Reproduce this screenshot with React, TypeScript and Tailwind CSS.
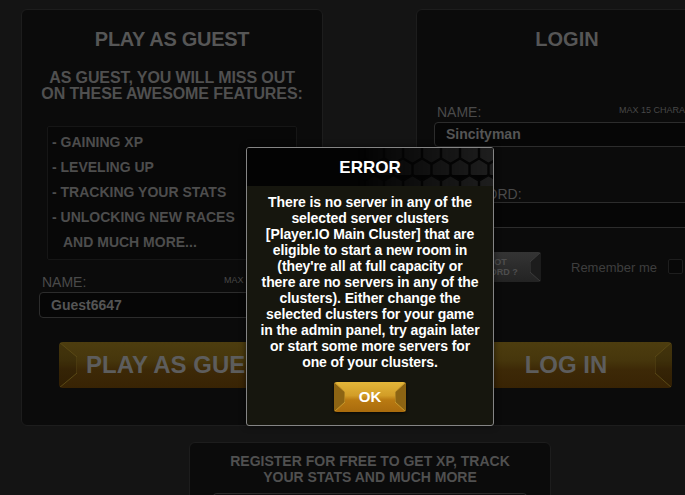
import React from 'react';

const FEATURES = ['- GAINING XP', '- LEVELING UP', '- TRACKING YOUR STATS', '- UNLOCKING NEW RACES'];

const ERROR_LINES = [
  'There is no server in any of the',
  'selected server clusters',
  '[Player.IO Main Cluster] that are',
  'eligible to start a new room in',
  "(they're all at full capacity or",
  'there are no servers in any of the',
  'clusters). Either change the',
  'selected clusters for your game',
  'in the admin panel, try again later',
  'or start some more servers for',
  'one of your clusters.',
];

// hexagonal notch drawn on the side of the gold buttons
function Notch({ side, w, h, fill, line }: { side: 'left' | 'right'; w: number; h: number; fill: string; line: string }) {
  const t = Math.round(h * 0.32);
  const pts = `0,0 ${w},${t} ${w},${h - t} 0,${h}`;
  return (
    <svg
      width={w}
      height={h}
      viewBox={`0 0 ${w} ${h}`}
      className={`absolute top-0 ${side === 'left' ? 'left-0' : 'right-0 -scale-x-100'}`}
    >
      <polygon points={pts} fill={fill} />
      <polyline points={pts} fill="none" stroke={line} strokeWidth="1" />
    </svg>
  );
}

function HexPattern() {
  return (
    <svg className="absolute inset-0 w-full h-full" viewBox="0 0 246 38" preserveAspectRatio="none">
      <defs>
        <pattern id="hex" width="19" height="33" patternUnits="userSpaceOnUse" x="4" y="-6">
          <path d="M9.5 0.5 L18.5 5.75 L18.5 16.25 L9.5 21.5 L0.5 16.25 L0.5 5.75 Z" fill="#1e1e1e" stroke="#050505" strokeWidth="1.5" />
          <path d="M0 17 L9 22.25 L9 32.75 L0 38 L-9 32.75 L-9 22.25 Z" fill="#1e1e1e" stroke="#050505" strokeWidth="1.5" />
          <path d="M19 17 L28 22.25 L28 32.75 L19 38 L10 32.75 L10 22.25 Z" fill="#1e1e1e" stroke="#050505" strokeWidth="1.5" />
        </pattern>
        <linearGradient id="fade" x1="0" x2="1" y1="0" y2="0">
          <stop offset="0.45" stopColor="#fff" stopOpacity="0" />
          <stop offset="1" stopColor="#fff" stopOpacity="1" />
        </linearGradient>
        <mask id="fadeMask">
          <rect width="246" height="38" fill="url(#fade)" />
        </mask>
      </defs>
      <rect width="246" height="38" fill="url(#hex)" mask="url(#fadeMask)" />
    </svg>
  );
}

export default function App() {
  return (
    <div className="relative w-[685px] h-[495px] overflow-hidden bg-[#141414] font-['Liberation_Sans',Arial,sans-serif]">
      <div className="pt-[9px] pl-[21px]">
        <div className="flex gap-[93px] w-[697px]">
          {/* Guest panel */}
          <div className="shrink-0 w-[302px] h-[417px] rounded-[6px] border border-[#1d1d1d] bg-[#0b0b0b] flex flex-col">
            <h2 className="mt-[17px] text-center text-[20px] leading-[24px] tracking-[-0.3px] font-bold text-[#565656]">PLAY AS GUEST</h2>
            <p className="mt-[19px] text-center text-[16px] leading-[16px] tracking-[-0.1px] font-bold text-[#505050]">
              AS GUEST, YOU WILL MISS OUT
              <br />
              ON THESE AWESOME FEATURES:
            </p>
            <div className="mt-[24px] mx-auto w-[250px] border border-[#161616] bg-[#080808] rounded-[2px] pt-[3px] pb-[4px] pl-[4px]">
              {FEATURES.map(f => (
                <div key={f} className="text-[14px] leading-[25px] font-bold text-[#4d4d4d]">{f}</div>
              ))}
              <div className="pl-[11px] text-[14px] leading-[25px] font-bold text-[#4d4d4d]">AND MUCH MORE...</div>
            </div>
            <div className="mt-[14px] ml-[20px] flex items-start">
              <span className="w-[182px] text-[14px] leading-[16px] text-[#4a4a4a]">NAME:</span>
              <span className="text-[9px] leading-[12px] text-[#484848] whitespace-nowrap">MAX 15 CHARACTERS</span>
            </div>
            <div className="mt-[2px] ml-[17px] w-[266px] h-[26px] rounded-[4px] border border-[#2c2c2c] bg-[#060606] pl-[11px] flex items-center">
              <span className="text-[14px] font-bold text-[#555]">Guest6647</span>
            </div>
            <div className="relative mt-[24px] ml-[37px] w-[226px] h-[46px] rounded-[4px] overflow-hidden bg-[linear-gradient(to_bottom,#4d3d0f_0%,#46360c_40%,#3d2907_60%,#382304_100%)] pl-[18px] flex items-center justify-center">
              <Notch side="left" w={18} h={46} fill="rgba(0,0,0,0.12)" line="#5a4916" />
              <span className="text-[24px] font-bold text-[#5d5d5d] whitespace-nowrap">PLAY AS GUEST</span>
            </div>
          </div>

          {/* Login panel */}
          <div className="shrink-0 w-[302px] h-[417px] rounded-[6px] border border-[#1d1d1d] bg-[#0b0b0b] flex flex-col">
            <h2 className="mt-[17px] text-center text-[20px] leading-[24px] font-bold text-[#565656]">LOGIN</h2>
            <div className="mt-[53px] ml-[20px] flex items-start">
              <span className="w-[182px] text-[14px] leading-[16px] text-[#4a4a4a]">NAME:</span>
              <span className="text-[9px] leading-[12px] text-[#484848] whitespace-nowrap">MAX 15 CHARACTERS</span>
            </div>
            <div className="mt-[2px] ml-[17px] w-[266px] h-[25px] rounded-[4px] border border-[#2c2c2c] bg-[#060606] pl-[11px] flex items-center">
              <span className="text-[14px] font-bold text-[#555]">Sincityman</span>
            </div>
            <div className="mt-[40px] ml-[20px] text-[14px] leading-[15px] text-[#4a4a4a]">PASSWORD:</div>
            <div className="ml-[17px] w-[266px] h-[26px] rounded-[4px] border border-[#2c2c2c] bg-[#060606]" />
            <div className="mt-[24px] flex items-start">
              <div className="relative ml-[29px] w-[95px] h-[30px] rounded-[3px] overflow-hidden bg-[linear-gradient(to_bottom,#343434,#232323)] pr-[12px] flex flex-col items-center justify-center">
                <Notch side="right" w={11} h={30} fill="#1c1c1c" line="#3c3c3c" />
                <span className="text-[9px] leading-[10px] font-bold text-[#4e4e4e]">FORGOT</span>
                <span className="text-[9px] leading-[10px] font-bold text-[#4e4e4e]">PASSWORD ?</span>
              </div>
              <span className="ml-[30px] mt-[8px] text-[13px] leading-[15px] text-[#3e3e3e] whitespace-nowrap">Remember me</span>
              <span className="ml-[11px] mt-[7px] w-[15px] h-[15px] shrink-0 rounded-[2px] border border-[#1e1e1e] bg-[#080808]" />
            </div>
            <div className="relative mt-[60px] ml-[43px] w-[212px] h-[46px] rounded-[4px] overflow-hidden bg-[linear-gradient(to_bottom,#4d3d0f_0%,#46360c_40%,#3d2907_60%,#382304_100%)] flex items-center justify-center">
              <Notch side="right" w={17} h={46} fill="rgba(0,0,0,0.12)" line="#5a4916" />
              <span className="text-[24px] font-bold text-[#5d5d5d]">LOG IN</span>
            </div>
          </div>
        </div>

        {/* Register box */}
        <div className="ml-[168px] mt-[16px] w-[362px] h-[80px] rounded-[6px] border border-[#1d1d1d] bg-[#0b0b0b] pt-[10px] flex flex-col items-center">
          <p className="text-center text-[14px] leading-[16px] font-bold text-[#505050]">
            REGISTER FOR FREE TO GET XP, TRACK
            <br />
            YOUR STATS AND MUCH MORE
          </p>
          <div className="mt-[8px] w-[314px] h-[20px] rounded-t-[4px] border-t border-x border-[#2a2a2a] bg-[#0e0e0e]" />
        </div>
      </div>

      {/* Error dialog */}
      <div className="absolute left-[246px] top-[147px] w-[248px] h-[279px] rounded-[3px] border border-[#858585] bg-[#16160e] overflow-hidden flex flex-col shadow-[0_0_6px_rgba(0,0,0,0.6)]">
        <div className="relative h-[38px] shrink-0 bg-[#030303] pt-[10px]">
          <HexPattern />
          <div className="relative text-center text-[17px] leading-[20px] font-bold text-white">ERROR</div>
        </div>
        <div className="pt-[8px] flex flex-col items-center">
          {ERROR_LINES.map(line => (
            <div key={line} className="whitespace-nowrap text-center text-[14px] leading-[16px] tracking-[-0.1px] font-bold text-white">{line}</div>
          ))}
          <div className="relative mt-[12px] w-[72px] h-[30px] rounded-[3px] overflow-hidden bg-[linear-gradient(to_bottom,#e3b63a_0%,#d29d27_45%,#b97a12_60%,#a96b0d_100%)] shadow-[0_1px_3px_rgba(0,0,0,0.7)] flex items-center justify-center">
            <Notch side="left" w={11} h={30} fill="#8c6413" line="#c99a2c" />
            <Notch side="right" w={11} h={30} fill="#8c6413" line="#c99a2c" />
            <span className="relative text-[15px] font-bold text-white">OK</span>
          </div>
        </div>
      </div>
    </div>
  );
}
